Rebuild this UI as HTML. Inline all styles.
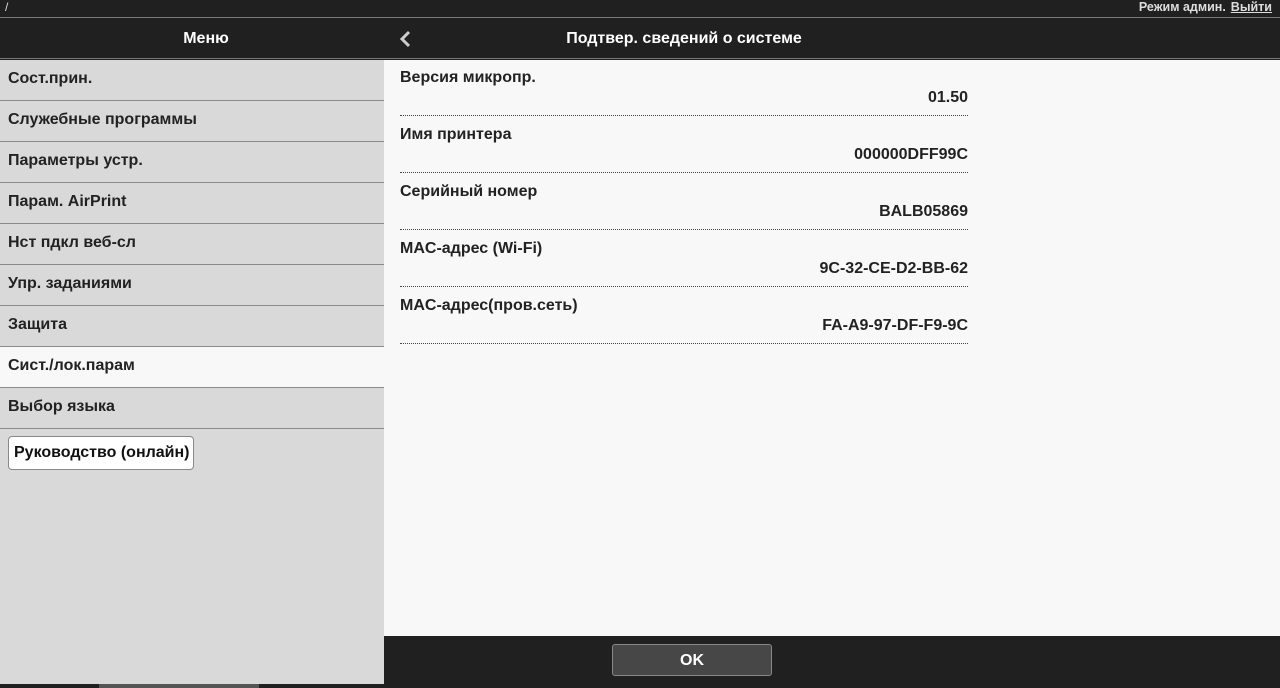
<!DOCTYPE html>
<html><head><meta charset="utf-8"><style>
*{margin:0;padding:0;box-sizing:border-box}
body{width:1280px;height:688px;overflow:hidden;background:#202020;font-family:"Liberation Sans",Arial,sans-serif;position:relative}
.top{position:absolute;left:0;top:0;width:1280px;height:18px;background:#202020;border-bottom:1px solid #7a7a7a;color:#ddd;font-size:12px}
.top .l{position:absolute;left:5px;top:0}
.top .r{position:absolute;right:8px;top:0;font-weight:bold;color:#ddd;font-size:12.5px}
.top .r u{margin-left:5px}
.hdr{position:absolute;top:19px;height:40px;background:#202020;color:#fff;font-weight:bold;font-size:16px;line-height:40px;border-bottom:1px solid #777}
.hdr .t{position:absolute;top:0;width:600px;text-align:center}
.left{position:absolute;left:0;top:60px;width:384px;height:624px;background:#d9d9d9}
.item{height:41px;border-bottom:1px solid #8a8a8a;padding-left:8px;font-size:16px;font-weight:bold;color:#222;line-height:38px}
.item.sel{background:#f8f8f8}
.btn{position:absolute;left:8px;top:376px;width:186px;height:34px;background:#fff;border:1px solid #888;border-radius:4px;font-size:16px;font-weight:bold;color:#111;line-height:32px;padding-left:5px}
.main{position:absolute;left:384px;top:60px;width:896px;height:576px;background:#f8f8f8}
.row{position:absolute;left:16px;width:568px;height:56px;border-bottom:1px dotted #444;font-size:16px;font-weight:bold;color:#222}
.row .k{position:absolute;left:0;top:9px}
.row .v{position:absolute;right:0;top:29px}
.foot{position:absolute;left:384px;top:636px;width:896px;height:48px;background:#202020}
.ok{position:absolute;left:228px;top:8px;width:160px;height:32px;background:#474747;border:1px solid #888;border-radius:3px;color:#fff;font-weight:bold;font-size:16px;text-align:center;line-height:32px}
.sb{position:absolute;left:99px;top:684px;width:160px;height:4px;background:#555}
</style></head><body>
<div class="top"><span class="l">/</span><span class="r">Режим админ.<u>Выйти</u></span></div>
<div class="hdr" style="left:0;width:384px"><span class="t" style="left:-94px">Меню</span></div>
<div class="hdr" style="left:384px;width:896px"><span class="t" style="left:0">Подтвер. сведений о системе</span>
<svg style="position:absolute;left:14px;top:11px" width="14" height="18" viewBox="0 0 14 18"><path d="M11 2 L4 9 L11 16" stroke="#ccc" stroke-width="3" fill="none"/></svg></div>
<div class="left">
<div class="item">Сост.прин.</div>
<div class="item">Служебные программы</div>
<div class="item">Параметры устр.</div>
<div class="item">Парам. AirPrint</div>
<div class="item">Нст пдкл веб-сл</div>
<div class="item">Упр. заданиями</div>
<div class="item">Защита</div>
<div class="item sel">Сист./лок.парам</div>
<div class="item">Выбор языка</div>
<div class="btn">Руководство (онлайн)</div>
</div>
<div class="main">
<div class="row" style="top:0"><span class="k">Версия микропр.</span><span class="v">01.50</span></div>
<div class="row" style="top:57px"><span class="k">Имя принтера</span><span class="v">000000DFF99C</span></div>
<div class="row" style="top:114px"><span class="k">Серийный номер</span><span class="v">BALB05869</span></div>
<div class="row" style="top:171px"><span class="k">MAC-адрес (Wi-Fi)</span><span class="v">9C-32-CE-D2-BB-62</span></div>
<div class="row" style="top:228px"><span class="k">MAC-адрес(пров.сеть)</span><span class="v">FA-A9-97-DF-F9-9C</span></div>
</div>
<div class="foot"><div class="ok">OK</div></div>
<div class="sb"></div>
</body></html>
